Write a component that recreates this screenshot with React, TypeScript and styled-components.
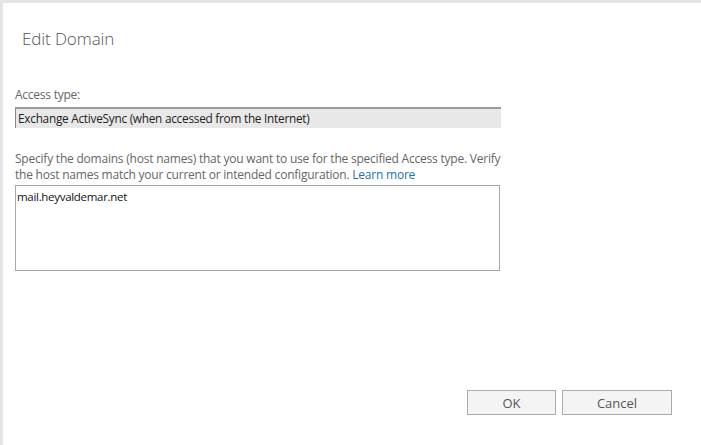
import React from "react";
import styled, { createGlobalStyle } from "styled-components";

const Global = createGlobalStyle`
  html, body { margin: 0; padding: 0; background: #fff; }
  body { font-family: "Open Sans", "Noto Sans", Arial, sans-serif; }
  * { box-sizing: border-box; }
`;

const Frame = styled.div`
  width: 701px;
  height: 445px;
  border-top: 3px solid #e4e4e4;
  border-left: 3px solid #e4e4e4;
  background: #fff;
  display: flex;
  flex-direction: column;
`;

const Title = styled.h1`
  margin: 0;
  padding: 24px 0 0 19px;
  font-family: "Open Sans", sans-serif;
  font-weight: 300;
  font-size: 17px;
  line-height: 24px;
  color: #555;
  letter-spacing: -0.1px;
`;

const Body = styled.div`
  padding: 36px 0 0 12px;
  display: flex;
  flex-direction: column;
`;

const Label = styled.div`
  font-size: 12px;
  line-height: 16px;
  color: #666;
  letter-spacing: -0.25px;
`;

const ReadOnlyField = styled.div`
  margin-top: 4px;
  width: 486px;
  height: 21px;
  background: #e8e8e8;
  border-top: 2px solid #9a9a9a;
  border-left: 1px solid #8a8a8a;
  font-size: 11.8px;
  line-height: 18px;
  padding-left: 2px;
  color: #222;
  letter-spacing: -0.25px;
`;

const Description = styled.p`
  margin: 23px 0 0 0;
  width: 495px;
  font-size: 12px;
  line-height: 16px;
  color: #666;
  letter-spacing: -0.22px;
  white-space: nowrap;
`;

const Link = styled.a`
  color: #1f6fb0;
  text-decoration: none;
`;

const TextArea = styled.div`
  margin-top: 2px;
  width: 485px;
  height: 86px;
  border: 1px solid #a8a8a8;
  font-size: 11.5px;
  line-height: 18px;
  padding: 2px 0 0 1px;
  color: #111;
  letter-spacing: -0.3px;
`;

const Footer = styled.div`
  margin-top: auto;
  padding: 0 29px 30px 0;
  display: flex;
  justify-content: flex-end;
  gap: 6px;
`;

const Button = styled.button<{ $w: number }>`
  width: ${(p) => p.$w}px;
  height: 25px;
  background: #f4f4f4;
  border: 1px solid #ababab;
  font-family: "Open Sans", sans-serif;
  font-size: 13px;
  color: #555;
  padding: 0;
  cursor: pointer;
`;

export default function App() {
  return (
    <>
      <Global />
      <Frame>
        <Title>Edit Domain</Title>
        <Body>
          <Label>Access type:</Label>
          <ReadOnlyField>Exchange ActiveSync (when accessed from the Internet)</ReadOnlyField>
          <Description>
            Specify the domains (host names) that you want to use for the specified Access type. Verify
            <br />
            the host names match your current or intended configuration. <Link href="#">Learn more</Link>
          </Description>
          <TextArea>mail.heyvaldemar.net</TextArea>
        </Body>
        <Footer>
          <Button $w={89}>OK</Button>
          <Button $w={110}>Cancel</Button>
        </Footer>
      </Frame>
    </>
  );
}
